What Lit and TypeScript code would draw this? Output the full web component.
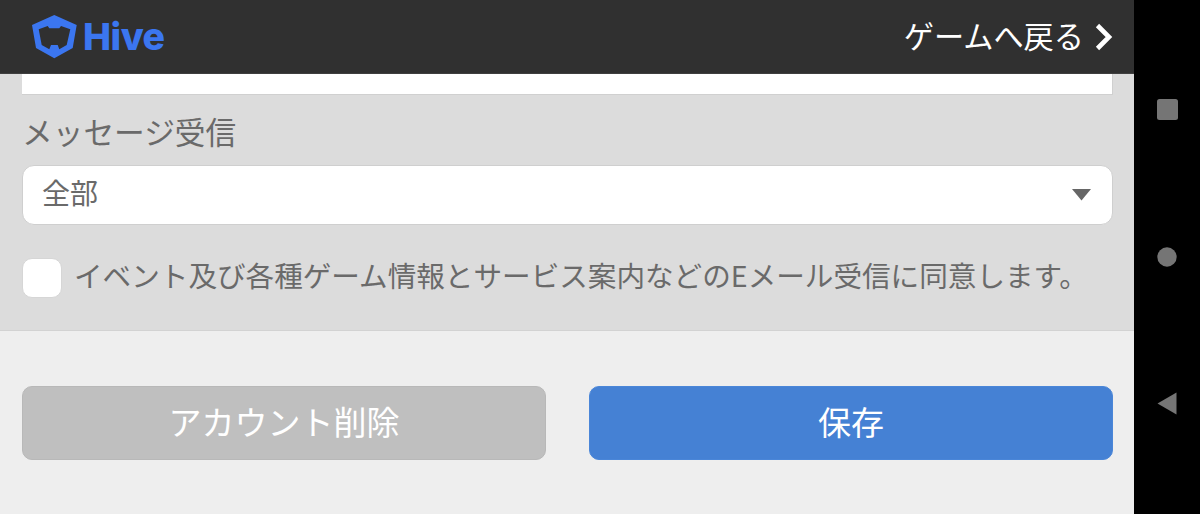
import { LitElement, html, css } from "lit";
import { customElement } from "lit/decorators.js";

@customElement("app-root")
export class AppRoot extends LitElement {
  static styles = css`
    :host { display: flex; width: 1200px; height: 514px; overflow: hidden; background: #000;
      font-family: "Noto Sans CJK JP", "Noto Sans", sans-serif; }
    .app { width: 1134px; display: flex; flex-direction: column; flex: none; }
    .header { height: 74px; box-sizing: border-box; background: #303030; border-bottom: 1px solid #3f3f3f;
      display: flex; align-items: center; justify-content: space-between; padding: 0 21px 0 32px; flex: none; }
    .brand { display: flex; align-items: center; gap: 6px; }
    .brand svg { display: block; }
    .brand span { font-family: Inter, "Open Sans", sans-serif; font-weight: 800; font-size: 37.5px; line-height: 40px;
      color: #3b76f0; letter-spacing: -0.5px; }
    .back { display: flex; align-items: center; gap: 11px; color: #fff; font-size: 30.2px; line-height: 40px; }
    .back span { position: relative; top: -2px; }
    .form { background: #dcdcdc; height: 257px; box-sizing: border-box; border-bottom: 1px solid #d2d2d2;
      padding: 0 21px 0 22px; display: flex; flex-direction: column; flex: none; }
    .field-top { height: 21px; background: #fff; border-bottom: 1px solid #d0d0d0; border-right: 1px solid #d0d0d0;
      box-sizing: border-box; flex: none; }
    .label { margin-top: 14px; font-size: 30.7px; line-height: 44px; color: #6a6a6a; height: 44px; }
    .select { margin-top: 12px; height: 60px; box-sizing: border-box; background: #fff; border: 1px solid #cfcfcf;
      border-radius: 12px; display: flex; align-items: center; justify-content: space-between;
      padding: 0 21px 0 19px; font-size: 28px; color: #6a6a6a; }
    .select span { position: relative; top: -3px; }
    .agree { margin-top: 33px; display: flex; align-items: center; gap: 13px; }
    .box { width: 40px; height: 40px; background: #fff; border: 1px solid #d6d6d6; border-radius: 10px; box-sizing: border-box; flex: none; }
    .agree span { font-size: 28.6px; line-height: 40px; color: #6a6a6a; white-space: nowrap; position: relative; top: -3px; left: -1px; }
    .footer { flex: 1; background: #eee; display: flex; gap: 43px; padding: 55px 21px 0 22px; }
    .btn { flex: 1; height: 74px; box-sizing: border-box; border-radius: 10px; display: flex; align-items: center;
      justify-content: center; color: #fff; font-size: 33px; }
    .btn span { position: relative; top: -2px; }
    .btn.gray { background: #bfbfbf; border: 1px solid #b8b8b8; }
    .btn.blue { background: #4581d4; border: 1px solid #4a86d8; }
    .nav { flex: 1; display: flex; flex-direction: column; align-items: center; padding-top: 99px; }
    .nav svg { display: block; }
    .circle { margin-top: 127px; }
    .tri { margin-top: 125px; }
  `;

  render() {
    return html`
      <div class="app">
        <div class="header">
          <div class="brand">
            <svg width="45" height="44" viewBox="0 0 45 44">
              <path fill="#3b76f0" fill-rule="evenodd" d="M22.3 0 L44.7 10 L40.7 33 L22.3 43.3 L4 33 L0 10 Z
                M6.7 14.3 L15.7 11 L17.3 13.3 L27.3 13.3 L29 11 L38.3 14.3 L34.7 30 L27.3 34.3 L25.7 30 L19 30 L17.3 34.3 L9.7 30 Z"/>
            </svg>
            <span>Hive</span>
          </div>
          <div class="back">
            <span>ゲームへ戻る</span>
            <svg width="18" height="28" viewBox="0 0 18 28">
              <path d="M2.5 2.5 L14 14 L2.5 25.5" fill="none" stroke="#fff" stroke-width="4.6"/>
            </svg>
          </div>
        </div>
        <div class="form">
          <div class="field-top"></div>
          <div class="label">メッセージ受信</div>
          <div class="select">
            <span>全部</span>
            <svg width="19" height="12" viewBox="0 0 19 12"><path fill="#666" d="M0 0 H19 L9.5 11.5 Z"/></svg>
          </div>
          <div class="agree">
            <div class="box"></div>
            <span>イベント及び各種ゲーム情報とサービス案内などのEメール受信に同意します。</span>
          </div>
        </div>
        <div class="footer">
          <div class="btn gray"><span>アカウント削除</span></div>
          <div class="btn blue"><span>保存</span></div>
        </div>
      </div>
      <div class="nav">
        <svg width="21" height="21" viewBox="0 0 21 21"><rect width="21" height="21" rx="2.5" fill="#757575"/></svg>
        <svg class="circle" width="20" height="20" viewBox="0 0 20 20"><circle cx="10" cy="10" r="9.7" fill="#757575"/></svg>
        <svg class="tri" width="20" height="23" viewBox="0 0 20 23"><path d="M0.5 11.5 L19.5 0.5 V22.5 Z" fill="#757575"/></svg>
      </div>
    `;
  }
}
